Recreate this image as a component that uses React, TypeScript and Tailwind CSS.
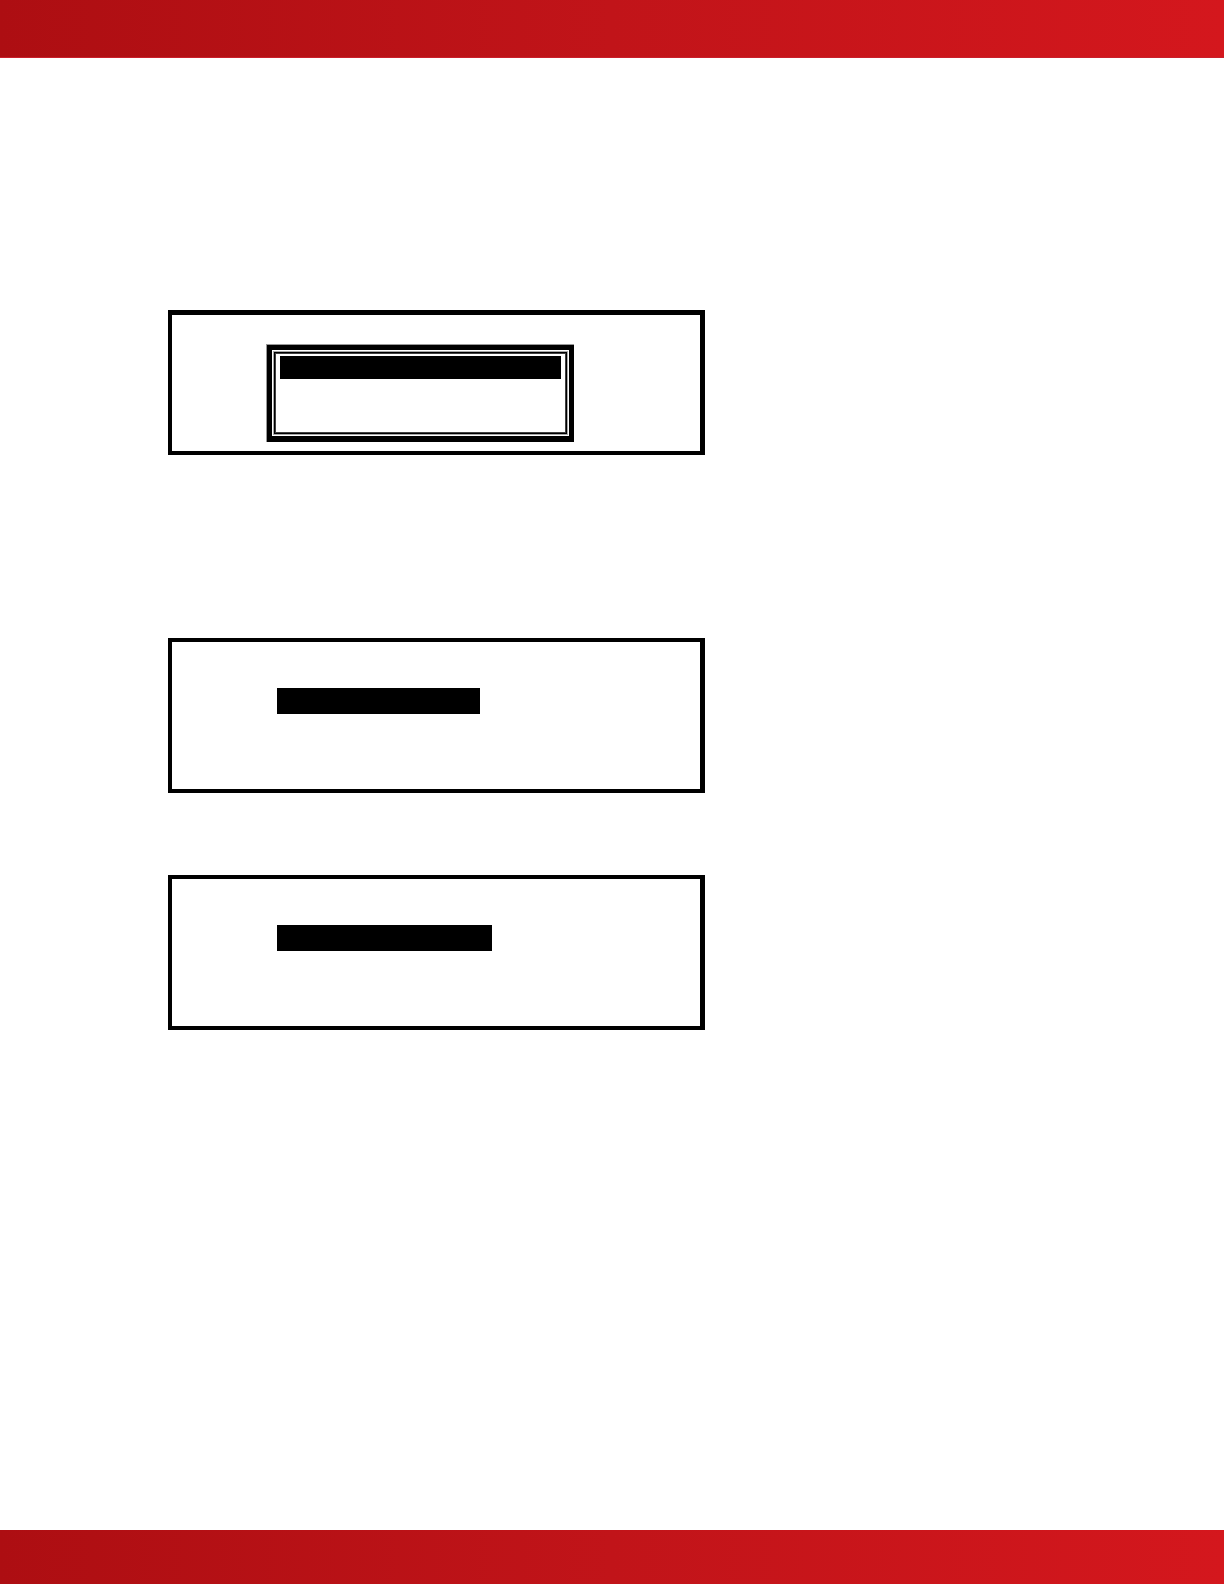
type BandProps = {
  as: "header" | "footer";
  className: string;
};

function Band({ as: Tag, className }: BandProps) {
  return (
    <Tag
      className={`shrink-0 bg-linear-to-r from-[#ad0e12] via-[#c11419] to-[#d4171d] ${className}`}
    />
  );
}

function MenuWindow() {
  return (
    <div className="w-full max-w-[308px] border-t border-l border-[#999999]">
      <div className="border-[5px] border-b-[6px] border-black p-px">
        <div className="border border-[#a8a8a8]">
          <div className="border border-black">
            <div className="h-[80px] border border-[#404040] px-1 pt-[2px]">
              <div className="h-[23px] bg-black" />
            </div>
          </div>
        </div>
      </div>
    </div>
  );
}

type SelectionScreenProps = {
  barClassName: string;
};

function SelectionScreen({ barClassName }: SelectionScreenProps) {
  return (
    <section className="h-[155px] w-full max-w-[537px] border-4 border-r-[5px] border-black pt-[46px] pl-[105px]">
      <div className={`h-[26px] w-full bg-black ${barClassName}`} />
    </section>
  );
}

export default function App() {
  return (
    <div className="flex min-h-screen flex-col bg-white">
      <Band as="header" className="h-[58px] border-b border-[#c9202c]" />
      <main className="flex flex-1 flex-col pt-[252px] pb-24 pl-[168px]">
        <section className="h-[145px] w-full max-w-[537px] border-4 border-t-[5px] border-r-[5px] border-black pt-[29px] pl-[94px]">
          <MenuWindow />
        </section>
        <div className="mt-[183px] flex flex-col gap-[82px]">
          <SelectionScreen barClassName="max-w-[203px]" />
          <SelectionScreen barClassName="max-w-[215px]" />
        </div>
      </main>
      <Band as="footer" className="h-[54px]" />
    </div>
  );
}
